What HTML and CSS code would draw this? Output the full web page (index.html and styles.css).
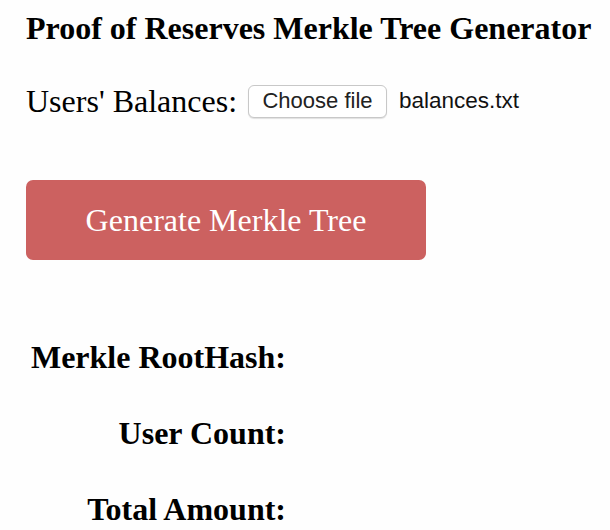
FILE: index.html
```html
<!DOCTYPE html>
<html>
<head>
<meta charset="utf-8">
<link rel="stylesheet" href="styles.css">
</head>
<body>
<main class="page">
  <h1 class="title">Proof of Reserves Merkle Tree Generator</h1>
  <div class="file-row">
    <span class="file-label">Users' Balances:</span>
    <span class="file-btn">Choose file</span>
    <span class="file-name">balances.txt</span>
  </div>
  <button class="generate">Generate Merkle Tree</button>
  <div class="results">
    <div class="result-row"><span class="result-label">Merkle RootHash:</span></div>
    <div class="result-row"><span class="result-label">User Count:</span></div>
    <div class="result-row"><span class="result-label">Total Amount:</span></div>
  </div>
</main>
</body>
</html>
```

FILE: styles.css
```css
html, body {
  margin: 0;
  padding: 0;
  background: #fefefe;
}
.page {
  padding: 0 0 0 26px;
  font-family: "Liberation Serif", "Times New Roman", serif;
  color: #000;
}
.title {
  margin: 0;
  padding-top: 10px;
  font-size: 32px;
  font-weight: bold;
  line-height: 36px;
}
.file-row {
  display: flex;
  align-items: center;
  margin-top: 38px;
  height: 34px;
}
.file-label {
  font-size: 32px;
}
.file-btn {
  margin-left: 11px;
  box-sizing: border-box;
  width: 139px;
  height: 33px;
  border: 1px solid #c8c8c8;
  border-radius: 6px;
  background: #fff;
  box-shadow: 0 1px 1px rgba(0,0,0,0.12);
  font-family: "Liberation Sans", Arial, sans-serif;
  font-size: 22px;
  color: #222;
  display: flex;
  align-items: center;
  justify-content: center;
}
.file-name {
  margin-left: 12px;
  font-family: "Liberation Sans", Arial, sans-serif;
  font-size: 22.5px;
  color: #111;
}
.generate {
  display: block;
  margin-top: 62px;
  width: 400px;
  height: 80px;
  border: none;
  border-radius: 7px;
  background: #cc6160;
  color: #fff;
  font-family: "Liberation Serif", "Times New Roman", serif;
  font-size: 32px;
  padding: 0;
}
.results {
  margin-top: 79px;
  width: 260px;
  display: flex;
  flex-direction: column;
  gap: 40px;
}
.result-row {
  text-align: right;
  height: 36px;
  line-height: 36px;
}
.result-label {
  font-size: 32px;
  font-weight: bold;
}
```
